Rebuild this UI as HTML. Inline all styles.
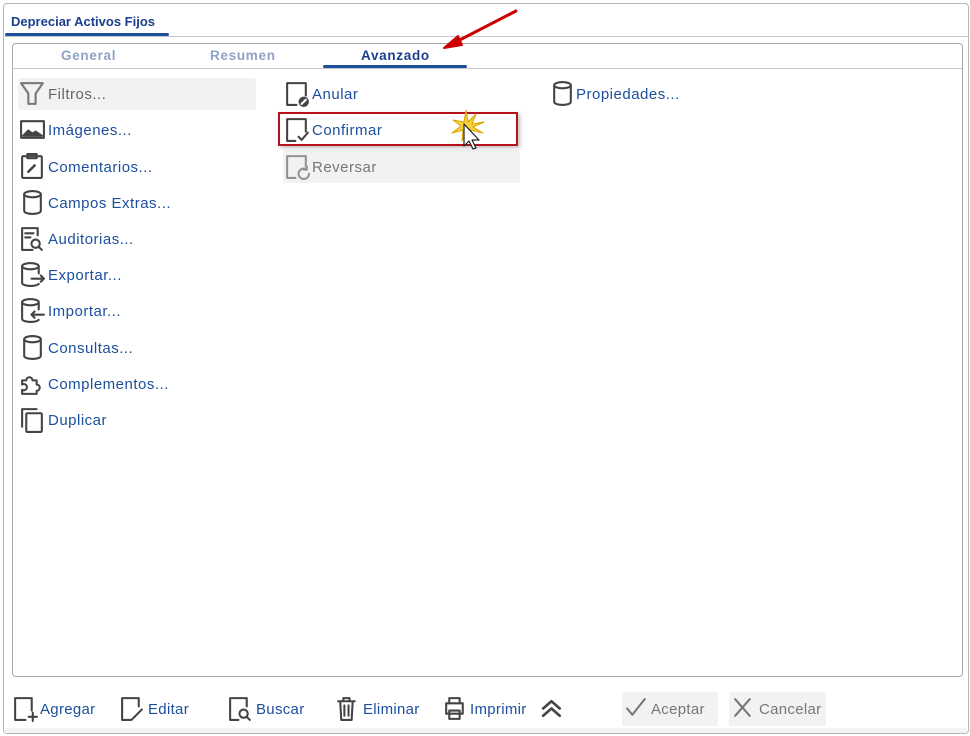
<!DOCTYPE html>
<html><head><meta charset="utf-8"><style>
*{margin:0;padding:0;box-sizing:border-box}
body{width:970px;height:736px;background:#fff;font-family:"Liberation Sans",sans-serif;position:relative;overflow:hidden}
.a{position:absolute}
.win{left:3px;top:3px;width:966px;height:731px;border:1px solid #b5b5b5;border-radius:4px;background:#fff}
.panel{left:12px;top:43px;width:951px;height:634px;border:1px solid #a8a8a8;border-radius:4px}
.t{position:absolute;font-size:15px;letter-spacing:0.5px;color:#1b4f9c;white-space:nowrap;line-height:18px}
.ic{position:absolute;width:27px;height:27px}
svg{fill:none;stroke:#444;stroke-width:2;stroke-linecap:round;stroke-linejoin:round}
.tab{position:absolute;top:48px;font-size:13.5px;font-weight:bold;color:#8ea3c6;letter-spacing:0.7px}
.b{position:absolute;top:701px;font-size:15px;letter-spacing:0.3px;color:#1b4f9c}
</style></head><body>
<div class="a win"></div>
<div class="a" style="left:11px;top:14px;font-size:13px;font-weight:bold;color:#1b3f8c">Depreciar Activos Fijos</div>
<div class="a" style="left:5px;top:33px;width:164px;height:3px;background:#1b4f9c;border-radius:2px"></div>
<div class="a" style="left:3px;top:36px;width:966px;height:1px;background:#c8c8c8"></div>
<div class="a panel"></div>
<div class="tab" style="left:61px">General</div>
<div class="tab" style="left:210px">Resumen</div>
<div class="tab" style="left:361px;color:#1b3f8c">Avanzado</div>
<div class="a" style="left:13px;top:68px;width:949px;height:1px;background:#c8c8c8"></div>
<div class="a" style="left:323px;top:65px;width:144px;height:3px;background:#1b4f9c;border-radius:2px"></div>
<svg class="a" style="left:440px;top:8px" width="80" height="42" viewBox="0 0 80 42"><path d="M76 3 L12 36" stroke="#c00" stroke-width="3"/><path d="M4 40 L18 28 L22 37 Z" fill="#c00" stroke="#c00"/></svg>

<div class="a" style="left:18px;top:78px;width:238px;height:32px;background:#f2f2f2;border-radius:3px"></div>
<div class="a" style="left:283px;top:150px;width:237px;height:33px;background:#f2f2f2;border-radius:3px"></div>
<div class="a" style="left:278px;top:112px;width:240px;height:34px;border:2px solid #b5121b;box-shadow:2px 2px 4px rgba(0,0,0,.25)"></div>

<svg class="ic" style="left:19px;top:80px" viewBox="0 0 26 26"><path d="M2 3h21l-7 10v10h-7V13z" stroke="#777"/></svg>
<div class="t" style="left:48px;top:86px;color:#666">Filtros...</div>
<svg class="ic" style="left:19px;top:116px" viewBox="0 0 26 26"><rect x="2" y="5" width="22" height="16"/><path d="M4 19l5-5 4 3 3-2 6 4z" fill="#444"/></svg>
<div class="t" style="left:48px;top:122px">Imágenes...</div>
<svg class="ic" style="left:19px;top:152px" viewBox="0 0 26 26"><rect x="3" y="4" width="19" height="21" rx="1"/><path d="M8 2h9v4H8z"/><path d="M9 19l6-6" stroke-width="2.5"/></svg>
<div class="t" style="left:48px;top:159px">Comentarios...</div>
<svg class="ic" style="left:19px;top:189px" viewBox="0 0 26 26"><ellipse cx="13" cy="5" rx="8" ry="3"/><path d="M5 5v16c0 2 4 3 8 3s8-1 8-3V5"/></svg>
<div class="t" style="left:48px;top:195px">Campos Extras...</div>
<svg class="ic" style="left:19px;top:225px" viewBox="0 0 26 26"><path d="M13 24H3V3h15v7"/><path d="M6 8h8M6 12h5"/><circle cx="16" cy="18" r="4"/><path d="M19 21l3 3"/></svg>
<div class="t" style="left:48px;top:231px">Auditorias...</div>
<svg class="ic" style="left:19px;top:261px" viewBox="0 0 26 26"><ellipse cx="11" cy="5" rx="8" ry="3"/><path d="M3 5v16c0 2 4 3 8 3s7-1 8-2M19 5v7M12 17h12M21 14l3 3-3 3"/></svg>
<div class="t" style="left:48px;top:267px">Exportar...</div>
<svg class="ic" style="left:19px;top:297px" viewBox="0 0 26 26"><ellipse cx="11" cy="5" rx="8" ry="3"/><path d="M3 5v16c0 2 4 3 8 3s7-1 8-2M19 5v7M12 17h12M15 14l-3 3 3 3"/></svg>
<div class="t" style="left:48px;top:303px">Importar...</div>
<svg class="ic" style="left:19px;top:334px" viewBox="0 0 26 26"><ellipse cx="13" cy="5" rx="8" ry="3"/><path d="M5 5v16c0 2 4 3 8 3s8-1 8-3V5"/></svg>
<div class="t" style="left:48px;top:340px">Consultas...</div>
<svg class="ic" style="left:19px;top:370px" viewBox="0 0 26 26"><path d="M3 10h4a3 3 0 1 1 6 0h4v4a3 3 0 1 1 0 6v3H3v-4a3 3 0 1 0 0-5z"/></svg>
<div class="t" style="left:48px;top:376px">Complementos...</div>
<svg class="ic" style="left:19px;top:406px" viewBox="0 0 26 26"><path d="M3 20V3h14"/><rect x="7" y="7" width="15" height="18" rx="1"/></svg>
<div class="t" style="left:48px;top:412px">Duplicar</div>

<svg class="ic" style="left:284px;top:80px" viewBox="0 0 26 26"><path d="M12 24H3V3h18v12"/><circle cx="19" cy="21" r="4" fill="#444"/><path d="M17 23l4-4" stroke="#fff"/></svg>
<div class="t" style="left:312px;top:86px">Anular</div>
<svg class="ic" style="left:284px;top:116px" viewBox="0 0 26 26"><path d="M11 24H3V3h18v12"/><path d="M14 20l3 3 6-7"/></svg>
<div class="t" style="left:312px;top:122px">Confirmar</div>
<svg class="ic" style="left:284px;top:153px;opacity:.55" viewBox="0 0 26 26"><path d="M11 24H3V3h18v10"/><path d="M24 20a5 5 0 1 1-2-4M22 13v3h-3"/></svg>
<div class="t" style="left:312px;top:159px;color:#777">Reversar</div>
<svg class="a" style="left:448px;top:108px" width="40" height="44" viewBox="0 0 40 44"><path d="M18 2l2 12 8-8-4 10 12-2-11 5 10 6-12-3 2 11-6-9-5 9 1-11-11 3 9-7-8-6 11 2z" fill="#f6d23c" stroke="#d9a400" stroke-width="1"/><path d="M16 16v22l5-5 4 8 3-1-4-8 7 0z" fill="#fff" stroke="#222" stroke-width="1.2"/></svg>

<svg class="ic" style="left:549px;top:80px" viewBox="0 0 26 26"><ellipse cx="13" cy="5" rx="8" ry="3"/><path d="M5 5v16c0 2 4 3 8 3s8-1 8-3V5"/></svg>
<div class="t" style="left:576px;top:86px">Propiedades...</div>

<div class="a" style="left:5px;top:728px;width:962px;height:5px;background:#f2f4f6"></div>
<svg class="ic" style="left:12px;top:695px" viewBox="0 0 26 26"><path d="M13 24H3V3h16v12M20 17v8M16 21h8"/></svg>
<div class="b" style="left:40px">Agregar</div>
<svg class="ic" style="left:119px;top:695px" viewBox="0 0 26 26"><path d="M11 24H3V3h16v8M12 24l10-10"/></svg>
<div class="b" style="left:148px">Editar</div>
<svg class="ic" style="left:227px;top:695px" viewBox="0 0 26 26"><path d="M11 24H3V3h16v8"/><circle cx="16" cy="18" r="4"/><path d="M19 21l3 3"/></svg>
<div class="b" style="left:256px">Buscar</div>
<svg class="ic" style="left:334px;top:695px" viewBox="0 0 26 26"><path d="M4 6h16M9 6V3h6v3M6 6l1 18h10l1-18M10 10v10M14 10v10"/></svg>
<div class="b" style="left:363px">Eliminar</div>
<svg class="ic" style="left:442px;top:695px" viewBox="0 0 26 26"><path d="M7 8V3h10v5M4 8h16v10H4zM7 15h10v8H7z"/></svg>
<div class="b" style="left:470px">Imprimir</div>
<svg class="ic" style="left:540px;top:695px" viewBox="0 0 26 26"><path d="M3 13l8-7 8 7M3 20l8-7 8 7" stroke-width="2.5"/></svg>
<div class="a" style="left:622px;top:692px;width:96px;height:34px;background:#f2f2f2;border-radius:2px"></div>
<svg class="ic" style="left:624px;top:695px" viewBox="0 0 26 26"><path d="M3 13l5 6L20 4" stroke="#777"/></svg>
<div class="b" style="left:651px;color:#777">Aceptar</div>
<div class="a" style="left:729px;top:692px;width:97px;height:34px;background:#f2f2f2;border-radius:2px"></div>
<svg class="ic" style="left:731px;top:695px" viewBox="0 0 26 26"><path d="M4 4l14 16M18 4L4 20" stroke="#777"/></svg>
<div class="b" style="left:759px;color:#777">Cancelar</div>
</body></html>
